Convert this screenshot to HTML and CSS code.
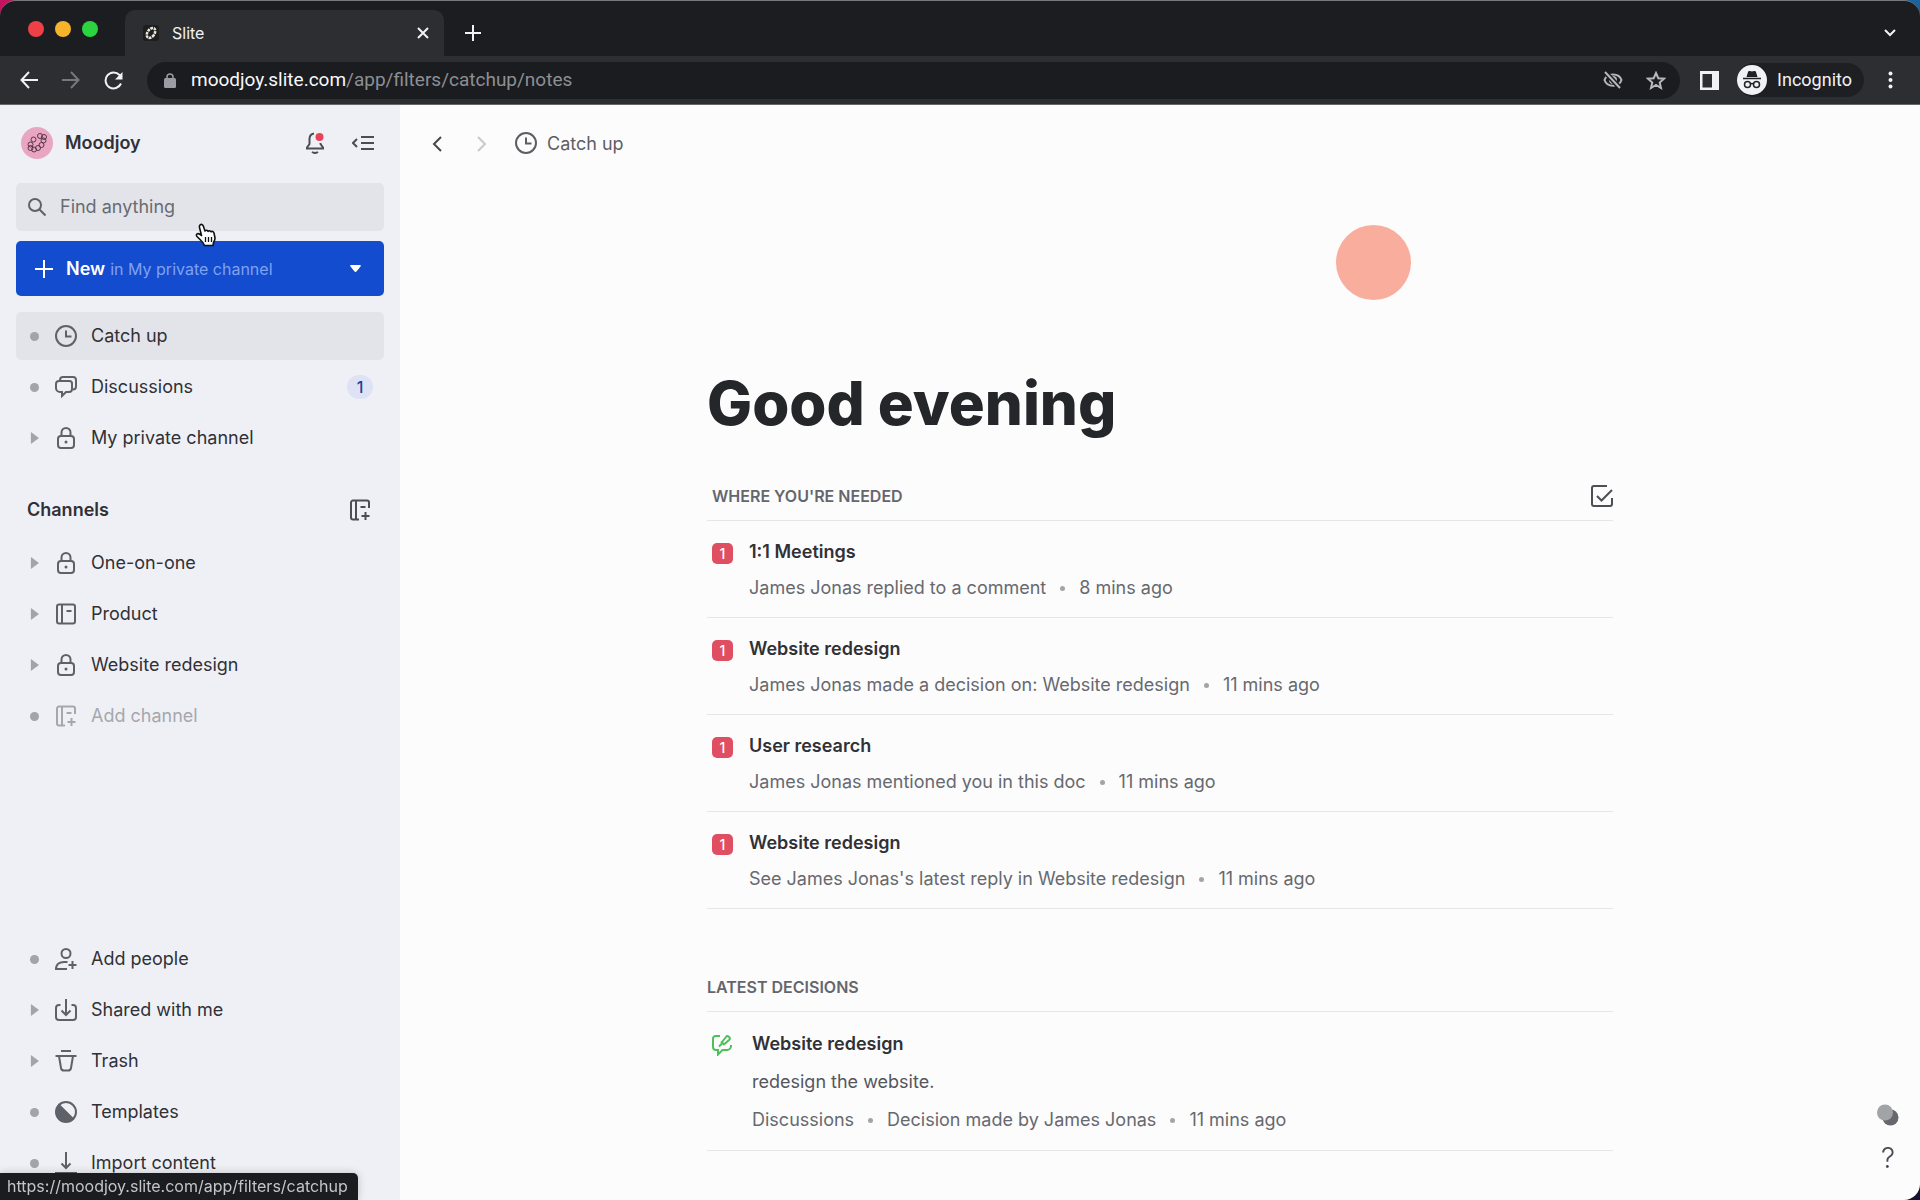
FILE: index.html
```html
<!DOCTYPE html>
<html lang="en">
<head>
<meta charset="utf-8">
<meta name="viewport" content="width=device-width, initial-scale=1">
<title>Slite</title>
<link rel="stylesheet" href="styles.css">
</head>
<body>
<svg class="sprite" aria-hidden="true">
  <symbol id="i-clock" viewBox="0 0 22 22"><circle cx="11" cy="11" r="10"/><path d="M11 5.500v6h5.500"/></symbol>
  <symbol id="i-discuss" viewBox="0 0 22 22"><path d="M5 5V4a3 3 0 0 1 3-3h10a3 3 0 0 1 3 3v6.500a3 3 0 0 1-3 3"/><path d="M4 5h10.500a2.500 2.500 0 0 1 2.500 2.500V13a3 3 0 0 1-3 3h-3l-4 4v-4H5a4 4 0 0 1-4-4V8a3 3 0 0 1 3-3z"/></symbol>
  <symbol id="i-lock" viewBox="0 0 22 22"><rect x="3" y="9" width="16" height="12" rx="3"/><path d="M6.500 9V5.500a4.500 4.500 0 0 1 9 0V9"/><circle cx="11" cy="15" r="1.500" class="solid"/></symbol>
  <symbol id="i-book" viewBox="0 0 22 22"><rect x="2" y="1.500" width="18" height="19" rx="2"/><path d="M7 1.500v19M11.500 8h5"/></symbol>
  <symbol id="i-book-add" viewBox="0 0 22 22"><path d="M10 20.500H4a2 2 0 0 1-2-2v-15a2 2 0 0 1 2-2h14a2 2 0 0 1 2 2V9M7 1.500v19M11.500 8h5M16.500 13v8M12.500 17h8"/></symbol>
  <symbol id="i-person-add" viewBox="0 0 22 22"><circle cx="11" cy="5.500" r="4.500"/><path d="M12 21H1c0-5 4-7 8-7h3.500M17.500 13v8M13.500 17h8"/></symbol>
  <symbol id="i-shared" viewBox="0 0 22 22"><path d="M5.500 6H4a3 3 0 0 0-3 3v9a3 3 0 0 0 3 3h14a3 3 0 0 0 3-3V9a3 3 0 0 0-3-3h-1.500M11 0v16M6.500 11.500 11 16l4.500-4.500"/></symbol>
  <symbol id="i-trash" viewBox="0 0 22 22"><path d="M6 1h10M0.500 6h21M4 6l2 12a3 3 0 0 0 3 2.500h4a3 3 0 0 0 3-2.500l2-12"/></symbol>
  <symbol id="i-templates" viewBox="0 0 22 22"><circle cx="11" cy="11" r="10"/><path class="fill" d="M4 4a10 10 0 0 0 14 14z"/></symbol>
  <symbol id="i-import" viewBox="0 0 22 22"><path d="M11 0v16M6.500 11.500 11 16l4.500-4.500M0 21h22"/></symbol>
</svg>

<div class="window">
  <header class="tabs">
    <div class="lights"><i class="red"></i><i class="amber"></i><i class="green"></i></div>
    <div class="tab">
      <svg class="favicon" viewBox="0 0 16 16" aria-hidden="true"><rect width="16" height="16" rx="3" fill="#1e1e1f" stroke="none"/><ellipse cx="8" cy="8" rx="3.500" ry="5.500" transform="rotate(35 8 8)" fill="none" stroke="#e8e3dc" stroke-width="2.600" stroke-dasharray="2.600 .8"/></svg>
      <span class="tab-name">Slite</span>
      <button class="bare" aria-label="Close tab"><svg width="12" height="12" viewBox="0 0 12 12"><path d="M1 1l10 10M11 1L1 11"/></svg></button>
    </div>
    <div class="tab-tools">
      <button class="bare" aria-label="New tab"><svg width="16" height="16" viewBox="0 0 16 16"><path d="M8 0v16M0 8h16"/></svg></button>
      <button class="bare" aria-label="Search tabs"><svg width="12" height="8" viewBox="0 0 12 8"><path d="M1 1l5 5 5-5"/></svg></button>
    </div>
  </header>

  <div class="toolbar">
    <button class="bare" aria-label="Back"><svg width="18" height="18" viewBox="0 0 18 18"><path d="M18 9H1.500M9 1L1.500 9 9 17"/></svg></button>
    <button class="bare dim" aria-label="Forward"><svg width="18" height="18" viewBox="0 0 18 18"><path d="M0 9h16.500M9 1l7.500 8L9 17"/></svg></button>
    <button class="bare" aria-label="Reload"><svg width="19" height="19" viewBox="0 0 19 19"><path d="M17 12.500a8 8 0 1 1-1.500-8.500l1.500 1.500"/><path class="solid" d="M18.500 1v7.500H11z"/></svg></button>
    <div class="address">
      <svg class="padlock" width="12" height="15" viewBox="0 0 12 15" aria-hidden="true"><rect y="5" width="12" height="10" rx="1.500" fill="#9a9ca3" stroke="none"/><path d="M3 6V4a3 3 0 0 1 6 0v2" fill="none" stroke="#9a9ca3" stroke-width="1.500"/></svg>
      <span class="url"><b>moodjoy.slite.com</b>/app/filters/catchup/notes</span>
      <button class="bare soft" aria-label="Third-party cookies blocked"><svg width="20" height="18" viewBox="0 0 20 18"><path d="M1.500 9C4 1.500 16 1.500 18.500 9 16 16.500 4 16.500 1.500 9z"/><circle cx="10" cy="9" r="3"/><path d="M2 1l15 16" stroke="#1b1c20" stroke-width="5"/><path d="M2 1l15 16"/></svg></button>
      <button class="bare soft" aria-label="Bookmark this page"><svg width="20" height="19" viewBox="0 0 20 19"><path d="M10 2l2.300 5.200 5.700.5-4.300 3.800 1.300 5.500-5-3-5 3 1.300-5.500L2 7.700l5.700-.5z"/></svg></button>
    </div>
    <button class="bare" aria-label="Side panel"><svg width="19" height="19" viewBox="0 0 19 19"><path class="solid" fill-rule="evenodd" d="M0 0h19v19H0zM2.500 3v13.500H12V3z"/></svg></button>
    <button class="incognito">
      <svg width="30" height="30" viewBox="0 0 30 30" aria-hidden="true"><circle cx="15" cy="15" r="15" fill="#f1f2f5" stroke="none"/><path d="M9.500 12l1.500-5q.4-1.500 2-1l2 .5 2-.5q1.600-.5 2 1l1.500 5z" fill="#202124" stroke="none"/><path d="M6 13.500h18" stroke="#202124" stroke-width="1.500"/><g fill="none" stroke="#202124" stroke-width="1.500"><circle cx="10.500" cy="19.500" r="3"/><circle cx="19.500" cy="19.500" r="3"/><path d="M13.500 19q1.500-1 3 0"/></g></svg>
      Incognito
    </button>
    <button class="bare" aria-label="Menu"><svg width="5" height="18" viewBox="0 0 5 18"><g class="solid"><circle cx="2.500" cy="2.500" r="2"/><circle cx="2.500" cy="9" r="2"/><circle cx="2.500" cy="15.500" r="2"/></g></svg></button>
  </div>

  <div class="app">
    <nav class="sidebar" aria-label="Workspace">
      <div class="brand">
        <svg width="32" height="32" viewBox="0 0 32 32" aria-hidden="true"><circle cx="16" cy="16" r="16" fill="#e9a6c3" stroke="none"/><g fill="none" stroke="#5b3648" stroke-width="1"><circle cx="19" cy="9" r="2.500"/><circle cx="23" cy="10" r="2.500"/><circle cx="22.500" cy="13.500" r="2.500"/><circle cx="20.500" cy="18" r="2.500"/><circle cx="17" cy="21" r="2.500"/><circle cx="13" cy="22.500" r="2.500"/><circle cx="9.500" cy="21" r="2.500"/><circle cx="9.500" cy="17.500" r="2.500"/><circle cx="12.500" cy="12.500" r="2.500"/></g></svg>
        <span class="brand-name">Moodjoy</span>
        <button class="bare" aria-label="Notifications"><svg width="18" height="22" viewBox="0 0 18 22"><path d="M8 1.500C5 2 3.500 4 3.500 7v5L1 15.500v1h16v-1L14.500 12v-1M6 20q3 2 6 0"/><circle cx="13.500" cy="5" r="4" fill="#e8435a" stroke="none"/></svg></button>
        <button class="bare" aria-label="Collapse sidebar"><svg width="22" height="16" viewBox="0 0 22 16"><path d="M5 4L1 8l4 4M9 2h13M9 8h13M9 14h13"/></svg></button>
      </div>

      <label class="search">
        <svg width="18" height="18" viewBox="0 0 18 18" aria-hidden="true"><circle cx="7" cy="7" r="6"/><path d="M11.500 11.500l6 6"/></svg>
        <input type="search" placeholder="Find anything" aria-label="Find anything">
      </label>

      <button class="new">
        <svg width="18" height="18" viewBox="0 0 18 18" aria-hidden="true"><path d="M9 0v18M0 9h18"/></svg>
        <span class="new-text"><b>New</b> <span>in My private channel</span></span>
        <svg width="11" height="7" viewBox="0 0 11 7" aria-hidden="true"><path class="solid" d="M1 0h9q1.500.5.500 1.500L6.500 6.500q-1 .8-2 0L.5 1.500Q-.5.5 1 0z"/></svg>
      </button>

      <ul class="nav">
        <li><a href="#" class="current"><i class="dot"></i><svg><use href="#i-clock"/></svg>Catch up</a></li>
        <li><a href="#"><i class="dot"></i><svg><use href="#i-discuss"/></svg>Discussions<span class="count">1</span></a></li>
        <li><a href="#"><i class="tri"></i><svg><use href="#i-lock"/></svg>My private channel</a></li>
      </ul>

      <div class="group">
        <h2>Channels</h2>
        <button class="bare" aria-label="Add channel"><svg width="22" height="22"><use href="#i-book-add"/></svg></button>
      </div>
      <ul class="nav">
        <li><a href="#"><i class="tri"></i><svg><use href="#i-lock"/></svg>One-on-one</a></li>
        <li><a href="#"><i class="tri"></i><svg><use href="#i-book"/></svg>Product</a></li>
        <li><a href="#"><i class="tri"></i><svg><use href="#i-lock"/></svg>Website redesign</a></li>
        <li><a href="#" class="muted"><i class="dot"></i><svg><use href="#i-book-add"/></svg>Add channel</a></li>
      </ul>

      <ul class="nav foot">
        <li><a href="#"><i class="dot"></i><svg><use href="#i-person-add"/></svg>Add people</a></li>
        <li><a href="#"><i class="tri"></i><svg><use href="#i-shared"/></svg>Shared with me</a></li>
        <li><a href="#"><i class="tri"></i><svg><use href="#i-trash"/></svg>Trash</a></li>
        <li><a href="#"><i class="dot"></i><svg><use href="#i-templates"/></svg>Templates</a></li>
        <li><a href="#"><i class="dot"></i><svg><use href="#i-import"/></svg>Import content</a></li>
      </ul>
    </nav>

    <main>
      <div class="crumbs">
        <button class="bare" aria-label="Previous"><svg width="10" height="16" viewBox="0 0 10 16"><path d="M9 1L2 8l7 7"/></svg></button>
        <button class="bare faint" aria-label="Next"><svg width="10" height="16" viewBox="0 0 10 16"><path d="M1 1l7 7-7 7"/></svg></button>
        <span class="here"><svg width="22" height="22"><use href="#i-clock"/></svg>Catch up</span>
      </div>

      <div class="content">
        <div class="sun"></div>
        <h1>Good evening</h1>

        <section>
          <div class="section-head inset"><h2>WHERE YOU'RE NEEDED</h2>
            <button class="bare" aria-label="Mark all as done"><svg width="22" height="22" viewBox="0 0 22 22"><path d="M16 1H3a2 2 0 0 0-2 2v16a2 2 0 0 0 2 2h16a2 2 0 0 0 2-2v-6M6 11l4.500 4.500L21 5"/></svg></button>
          </div>
          <article class="item"><span class="badge">1</span><div><h3>1:1 Meetings</h3><p>James Jonas replied to a comment<i></i>8 mins ago</p></div></article>
          <article class="item"><span class="badge">1</span><div><h3>Website redesign</h3><p>James Jonas made a decision on: Website redesign<i></i>11 mins ago</p></div></article>
          <article class="item"><span class="badge">1</span><div><h3>User research</h3><p>James Jonas mentioned you in this doc<i></i>11 mins ago</p></div></article>
          <article class="item"><span class="badge">1</span><div><h3>Website redesign</h3><p>See James Jonas's latest reply in Website redesign<i></i>11 mins ago</p></div></article>
        </section>

        <section class="decisions">
          <div class="section-head"><h2>LATEST DECISIONS</h2></div>
          <article class="item">
            <svg class="decision" width="20" height="22" viewBox="0 0 20 22" aria-hidden="true"><path d="M8 2H3.500A2.500 2.500 0 0 0 1 4.500V13a3 3 0 0 0 3 3h2v4.500L10.500 16H15a4 4 0 0 0 4-4v-1M7 12.500l3-3M9 7.500l3.500 3.500M10 8l4-5q1-1.500 2.500-.5l1 1q1 1.500-.5 2.500L12.500 10"/></svg>
            <div><h3>Website redesign</h3><p class="quote">redesign the website.</p><p>Discussions<i></i>Decision made by James Jonas<i></i>11 mins ago</p></div>
          </article>
        </section>
      </div>
    </main>
  </div>
</div>

<div class="helpers">
  <button class="bare" aria-label="Theme"><svg width="22" height="22" viewBox="0 0 22 22"><circle cx="13.500" cy="13.500" r="8" fill="#67686e" stroke="none"/><circle cx="8" cy="8.500" r="8" fill="#a1a3a7" stroke="none"/></svg></button>
  <button class="bare help" aria-label="Help">?</button>
</div>
<div class="status">https://moodjoy.slite.com/app/filters/catchup</div>
<svg class="pointer" width="22" height="24" viewBox="0 0 22 24" aria-hidden="true"><path d="M5 2q2-1.500 3.200.8L10 8q1.500-1.500 3 .3 1.500-1.300 3 .4 2-1 3 1.300l1 5q.2 2-1.500 4.500l-.5 3h-8.500q-1-3-3.500-5l-4-4q-1.500-2 .5-2.800 1.500-.5 4 1.800L4.500 4.500Q4 3 5 2z" fill="#fff" stroke="#111" stroke-width="1.600" stroke-linejoin="round"/><path d="M10.500 14v5M13.500 14v5M16.500 14v5" stroke="#111" stroke-width="1.300"/></svg>
</body>
</html>
```
FILE: styles.css
```css
* { box-sizing: border-box; }

body {
  margin: 0;
  min-height: 100vh;
  font: 18px/24px Inter, "Liberation Sans", sans-serif;
  color: #303136;
  background:
    linear-gradient(to bottom, transparent 50%, #15132e 50%),
    linear-gradient(to right, #c4145f, #16649f);
}

h1, h2, h3, p, ul { margin: 0; padding: 0; }
ul { list-style: none; }
a { color: inherit; text-decoration: none; }
button { font: inherit; color: inherit; border: 0; cursor: pointer; }
svg { flex: none; display: block; fill: none; stroke: currentColor; stroke-width: 2; }
.fill { fill: currentColor; }
.solid { fill: currentColor; stroke: none; }
.sprite { position: absolute; width: 0; height: 0; }

.bare {
  display: flex;
  align-items: center;
  justify-content: center;
  padding: 0;
  background: none;
}

.window {
  display: flex;
  flex-direction: column;
  min-height: 100vh;
  border-radius: 16px;
  overflow: hidden;
  border-top: 1px solid #77797d;
  background: #1c1d20;
}

/* Browser chrome */
.tabs {
  display: flex;
  align-items: center;
  height: 55px;
  padding: 0 24px 0 28px;
  color: #f1f2f5;
}
.lights { display: flex; gap: 11px; width: 97px; }
.lights i { width: 16px; height: 16px; border-radius: 50%; }
.red { background: #ee4046; }
.amber { background: #f6b42c; }
.green { background: #2cd53f; }
.tab {
  display: flex;
  align-items: center;
  align-self: flex-end;
  gap: 13px;
  width: 319px;
  height: 46px;
  padding: 0 15px 0 18px;
  border-radius: 10px 10px 0 0;
  background: #2d2e32;
}
.favicon { width: 16px; height: 16px; }
.tab-name { flex: 1; font-size: 16px; }
.tab-tools {
  display: flex;
  flex: 1;
  align-self: flex-end;
  align-items: center;
  justify-content: space-between;
  height: 46px;
  margin-left: 21px;
}

.toolbar {
  display: flex;
  align-items: center;
  gap: 24px;
  height: 49px;
  padding: 0 27px 0 20px;
  border-bottom: 1px solid #66676c;
  background: #2d2e32;
  color: #f1f2f5;
}
.dim { color: #77787d; }
.address {
  display: flex;
  align-items: center;
  flex: 1;
  gap: 23px;
  height: 37px;
  padding: 0 14px 0 17px;
  border-radius: 19px;
  background: #1b1c20;
}
.padlock { margin-right: -8px; }
.url {
  flex: 1;
  font: 19px/24px Roboto, sans-serif;
  color: #8d8f94;
  white-space: nowrap;
}
.url b { font-weight: 400; color: #f7f8fa; }
.soft { color: #b5b7bc; }
.toolbar .address + button { margin-left: -4px; }
.incognito {
  display: flex;
  align-items: center;
  gap: 10px;
  height: 34px;
  margin-left: -6px;
  padding: 0 12px 0 0;
  border-radius: 17px;
  background: #1e1f22;
  font: 18px/24px Roboto, sans-serif;
}

/* Application */
.app {
  flex: 1;
  display: grid;
  grid-template-columns: 400px 1fr;
}
.sidebar {
  display: flex;
  flex-direction: column;
  padding: 1px 16px 13px;
  background: #eff0f5;
}
.brand {
  display: flex;
  align-items: center;
  height: 74px;
  margin-bottom: 3px;
  padding: 0 10px 0 5px;
  gap: 12px;
  color: #4b4d55;
}
.brand-name { flex: 1; font-weight: 600; color: #303136; }
.brand button + button { margin-left: 16px; }

.search {
  display: flex;
  align-items: center;
  gap: 14px;
  height: 48px;
  padding: 0 12px;
  border-radius: 5px;
  background: #e3e4e9;
  color: #5f6168;
}
.search input {
  flex: 1;
  min-width: 0;
  padding: 0;
  border: 0;
  outline: 0;
  background: none;
  font: inherit;
  color: inherit;
}
.search input::placeholder { color: #696b72; opacity: 1; }

.new {
  display: flex;
  align-items: center;
  gap: 13px;
  height: 55px;
  margin: 10px 0 16px;
  padding: 0 23px 0 19px;
  border-radius: 5px;
  background: #134ccf;
  color: #fff;
}
.new-text { flex: 1; text-align: left; }
.new b { font-weight: 600; }
.new-text span { font-size: 16px; color: #7fa2f0; }

.nav { display: grid; gap: 3px; }
.nav a {
  display: flex;
  align-items: center;
  height: 48px;
  padding: 0 11px 0 14px;
  border-radius: 5px;
}
.nav svg { width: 22px; height: 22px; margin: 0 14px 0 16px; color: #5f6169; }
.nav .current { background: #e3e4e9; }
.nav .muted, .nav .muted svg { color: #a6a7ac; }
.dot, .tri { flex: none; width: 9px; height: 9px; background: #a3a4a8; }
.dot { border-radius: 50%; }
.tri { height: 12px; clip-path: polygon(10% 0, 100% 50%, 10% 100%); }
.count {
  width: 26px;
  margin-left: auto;
  border-radius: 12px;
  background: #dde3f4;
  color: #1d3f98;
  font-size: 16px;
  font-weight: 500;
  text-align: center;
}
.group {
  display: flex;
  align-items: center;
  justify-content: space-between;
  height: 48px;
  margin: 24px 0 5px;
  padding: 0 13px 0 11px;
  color: #4b4d55;
}
.group h2 { font-size: 18px; font-weight: 600; color: #303136; }
.foot { margin-top: auto; }

main { background: #fcfcfd; padding-bottom: 40px; }
.crumbs {
  display: flex;
  align-items: center;
  gap: 35px;
  height: 77px;
  padding: 0 32px;
  color: #45474d;
}
.faint { color: #c8c9cd; }
.here { display: flex; gap: 10px; margin-left: -7px; color: #5c5e64; }

.content { max-width: 906px; margin: 0 auto; }
.sun {
  width: 75px;
  height: 75px;
  margin: 43px 202px 0 auto;
  border-radius: 50%;
  background: #f9ad9d;
}
h1 {
  margin: 67px 0 32px;
  font-size: 60px;
  line-height: 72px;
  font-weight: 800;
  color: #25262a;
}
.section-head {
  display: flex;
  align-items: center;
  justify-content: space-between;
  height: 50px;
  border-bottom: 1px solid #e6e6e9;
  color: #4d4f56;
}
.section-head h2 { font-size: 16px; font-weight: 600; color: #64666c; }
.inset { padding-left: 5px; }
.decisions { margin-top: 53px; }

.item {
  display: flex;
  gap: 16px;
  padding: 13px 0 11px 5px;
  border-bottom: 1px solid #e6e6e9;
}
.item h3 { font-size: 18px; line-height: 36px; font-weight: 600; }
.item p {
  display: flex;
  align-items: center;
  gap: 14px;
  line-height: 36px;
  color: #67696f;
}
.item i { width: 5px; height: 5px; border-radius: 50%; background: #a3a4a8; }
.badge {
  width: 21px;
  height: 21px;
  margin-top: 9px;
  border-radius: 5px;
  background: #e04f61;
  color: #fff;
  font-size: 14px;
  line-height: 21px;
  font-weight: 500;
  text-align: center;
}
.decision { margin: 9px 0 0; color: #4cc15a; }
.decisions .item { gap: 20px; }
.decisions h3, .decisions p { line-height: 38px; }
.decisions .quote { color: #54565c; }

/* Floating layers */
.helpers {
  position: fixed;
  right: 21px;
  bottom: 24px;
  display: grid;
  gap: 14px;
  justify-items: center;
}
.help { font-size: 28px; line-height: 36px; font-weight: 300; color: #4b4d55; }
.status {
  position: fixed;
  left: 0;
  bottom: 0;
  padding: 1px 10px 2px 7px;
  border-radius: 0 5px 0 0;
  background: #1b1c20;
  color: #c4c5c9;
  font-size: 16px;
  box-shadow: 0 0 8px rgba(0, 0, 0, .2);
}
.pointer { position: fixed; left: 195px; top: 223px; }
```
